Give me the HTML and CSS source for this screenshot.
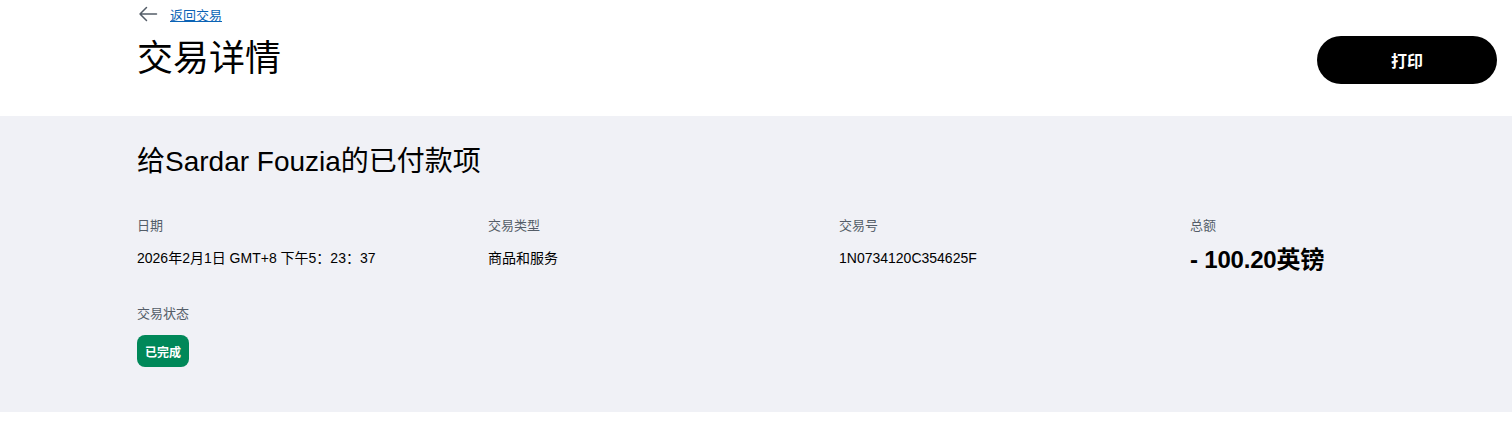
FILE: index.html
```html
<!DOCTYPE html>
<html lang="zh-CN">
<head>
<meta charset="utf-8">
<title>交易详情</title>
<link rel="stylesheet" href="styles.css">
</head>
<body>
<header class="top">
  <div class="top-left">
    <div class="back">
      <svg class="back-icon" width="20" height="16" viewBox="0 0 20 16" aria-hidden="true">
        <path d="M18.5 8H2M8.5 1.5L2 8l6.5 6.5" fill="none" stroke="#545d68" stroke-width="1.5" stroke-linecap="round" stroke-linejoin="round"/>
      </svg>
      <a class="back-link" href="#">返回交易</a>
    </div>
    <h1 class="title">交易详情</h1>
  </div>
  <button class="print-btn" type="button">打印</button>
</header>
<section class="details">
  <h2 class="heading">给Sardar Fouzia的已付款项</h2>
  <div class="grid">
    <div class="field">
      <div class="label">日期</div>
      <div class="value">2026年2月1日 GMT+8 下午5：23：37</div>
    </div>
    <div class="field">
      <div class="label">交易类型</div>
      <div class="value">商品和服务</div>
    </div>
    <div class="field">
      <div class="label">交易号</div>
      <div class="value">1N0734120C354625F</div>
    </div>
    <div class="field">
      <div class="label">总额</div>
      <div class="value amount">- 100.20英镑</div>
    </div>
  </div>
  <div class="field status">
    <div class="label">交易状态</div>
    <span class="badge">已完成</span>
  </div>
</section>
</body>
</html>
```

FILE: styles.css
```css
html, body {
  margin: 0;
  padding: 0;
  background: #ffffff;
}
body {
  font-family: "Liberation Sans", "Noto Sans CJK SC", Arial, sans-serif;
  color: #000000;
}
.top {
  height: 116px;
  box-sizing: border-box;
  padding: 0 15px 0 137px;
  display: flex;
  justify-content: space-between;
  align-items: flex-start;
}
.top-left {
  display: flex;
  flex-direction: column;
}
.back {
  display: flex;
  align-items: center;
  gap: 12px;
  height: 20px;
  margin-top: 4px;
}
.back-icon {
  display: block;
  margin-left: 1px;
}
.back-link {
  font-size: 13px;
  color: #0b63b5;
  text-decoration: underline;
  line-height: 20px;
  margin-top: 3px;
}
.title {
  margin: 13px 0 0;
  font-size: 36px;
  font-weight: 400;
  line-height: 44px;
}
.print-btn {
  margin-top: 36px;
  width: 180px;
  height: 48px;
  border: none;
  border-radius: 24px;
  background: #000000;
  color: #ffffff;
  font-family: inherit;
  font-size: 16px;
  font-weight: 700;
  cursor: pointer;
}
.details {
  background: #f0f1f6;
  height: 296px;
  box-sizing: border-box;
  padding: 28px 15px 0 137px;
}
.heading {
  margin: 0;
  font-size: 28px;
  font-weight: 400;
  line-height: 36px;
}
.grid {
  display: grid;
  grid-template-columns: repeat(4, 307px);
  column-gap: 44px;
  margin-top: 37px;
}
.label {
  font-size: 13px;
  line-height: 18px;
  color: #545d68;
}
.value {
  margin-top: 14px;
  font-size: 14px;
  line-height: 18px;
}
.amount {
  margin-top: 11px;
  font-size: 24px;
  font-weight: 700;
  line-height: 28px;
  letter-spacing: -0.2px;
}
.status {
  margin-top: 31px;
}
.badge {
  display: inline-flex;
  align-items: center;
  justify-content: center;
  margin-top: 12px;
  width: 52px;
  height: 32px;
  border-radius: 8px;
  background: #008859;
  color: #ffffff;
  font-size: 12px;
  font-weight: 700;
}
```
